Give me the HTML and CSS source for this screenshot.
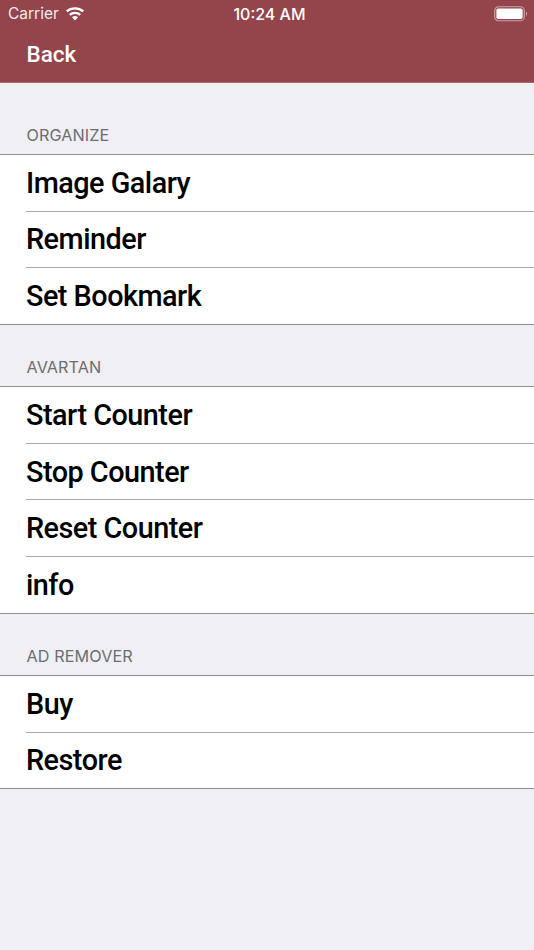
FILE: index.html
```html
<!DOCTYPE html>
<html lang="en">
<head>
<meta charset="utf-8">
<title>Settings</title>
<link rel="stylesheet" href="styles.css">
</head>
<body>
<header class="bar">
  <div class="status">
    <div class="status-left">
      <span>Carrier</span>
      <svg class="wifi" viewBox="0 0 18 14" width="18" height="14" aria-hidden="true">
        <path d="M9 13.6 6 10.3a4.4 4.4 0 0 1 6 0Z" fill="#fff"/>
        <path d="M4.6 8.7a6.7 6.7 0 0 1 8.8 0l1.6-1.8a9.2 9.2 0 0 0-12 0Z" fill="#fff"/>
        <path d="M1.5 5.3a11.5 11.5 0 0 1 15 0L18 3.5A14 14 0 0 0 0 3.5Z" fill="#fff"/>
      </svg>
    </div>
    <span class="clock">10:24 AM</span>
    <svg class="battery" viewBox="0 0 34 16" width="34" height="16" aria-hidden="true">
      <rect x="0.75" y="0.75" width="29.5" height="14" rx="3.8" fill="none" stroke="#fff" stroke-opacity="0.5" stroke-width="1.2"/>
      <rect x="2.4" y="2.4" width="26.2" height="10.7" rx="1.8" fill="#fff"/>
      <path d="M32 5.5v4.5c.7-.3 1.1-1.2 1.1-2.2s-.4-2-1.1-2.3Z" fill="#fff" fill-opacity="0.5"/>
    </svg>
  </div>
  <div class="nav"><span class="back">Back</span></div>
</header>
<main>
  <section class="group first">
    <h2 class="label">ORGANIZE</h2>
    <ul class="list">
      <li>Image Galary</li>
      <li>Reminder</li>
      <li>Set Bookmark</li>
    </ul>
  </section>
  <section class="group">
    <h2 class="label">AVARTAN</h2>
    <ul class="list">
      <li>Start Counter</li>
      <li>Stop Counter</li>
      <li>Reset Counter</li>
      <li>info</li>
    </ul>
  </section>
  <section class="group">
    <h2 class="label">AD REMOVER</h2>
    <ul class="list">
      <li>Buy</li>
      <li>Restore</li>
    </ul>
  </section>
</main>
</body>
</html>
```
FILE: styles.css
```css
* { box-sizing: border-box; }
html, body { margin: 0; padding: 0; }
body {
  width: 534px;
  height: 950px;
  overflow: hidden;
  background: #efeff4;
  font-family: Roboto, "Noto Sans", sans-serif;
}
.bar {
  height: 83px;
  background: #94454b;
  color: #fff;
  border-bottom: 1px solid #b0656b;
}
.status {
  height: 27px;
  padding: 0 6px 0 8px;
  display: flex;
  align-items: center;
  justify-content: space-between;
  position: relative;
  font-family: Inter, Roboto, sans-serif;
  font-size: 15.5px;
}
.status-left { display: flex; align-items: center; gap: 7px; }
.status-left span { opacity: .9; }
.clock {
  position: absolute;
  left: 5px;
  right: 0;
  text-align: center;
  font-size: 16px;
  font-weight: 500;
}
.nav {
  height: 53px;
  padding-left: 26.5px;
  display: flex;
  align-items: center;
}
.back { font-size: 22.5px; font-weight: 500; }
.label {
  margin: 0;
  height: 61.3px;
  padding: 0 0 9px 26.5px;
  display: flex;
  align-items: flex-end;
  font-family: Inter, Roboto, sans-serif;
  font-size: 16.2px;
  letter-spacing: .1px;
  font-weight: 400;
  color: #6d6d72;
}
.first .label { height: 70.9px; }
.list {
  list-style: none;
  margin: 0;
  padding: 0;
  background: #fff;
  border-top: 1px solid #8e8e8e;
  border-bottom: 1px solid #8e8e8e;
}
.list li {
  height: 56.65px;
  margin-left: 26px;
  display: flex;
  align-items: center;
  font-size: 28.8px;
  letter-spacing: -.5px;
  font-weight: 500;
  color: #000;
  border-bottom: 1px solid #aaa;
}
.list li:last-child { border-bottom: 0; height: 55.65px; }
```
